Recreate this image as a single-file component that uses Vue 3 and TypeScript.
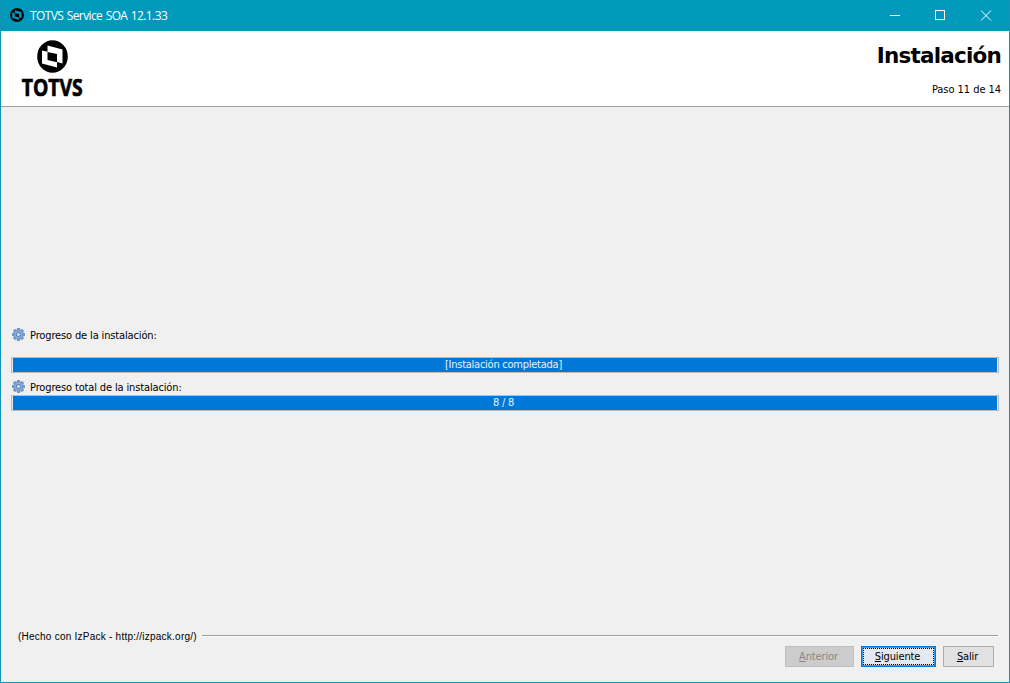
<script setup lang="ts">
interface ProgressItem {
  id: string
  label: string
  text: string
  percent: number
}

const items: ProgressItem[] = [
  { id: 'pack', label: 'Progreso de la instalación:', text: '[Instalación completada]', percent: 100 },
  { id: 'overall', label: 'Progreso total de la instalación:', text: '8 / 8', percent: 100 },
]
const teeth = [0, 45, 90, 135, 180, 225, 270, 315]
const panels = 'M10.5 5.5L25.5 9.5V23.5L20 22V14L10.5 12ZM5 10.5L10.5 11.7V20L20 22.3V27.5L5 23.5Z'
</script>

<template>
  <div class="window">
    <header class="titlebar">
      <svg class="app-icon" viewBox="0 0 31 33" preserveAspectRatio="none">
        <ellipse cx="15.5" cy="16.5" rx="15.5" ry="16.5" fill="#050505" />
        <path :d="panels" fill="#0099bc" />
      </svg>
      <span class="title">TOTVS Service SOA 12.1.33</span>
      <div class="controls">
        <svg viewBox="0 0 46 30"><path d="M17 15.5H27" /></svg>
        <svg viewBox="0 0 46 30"><rect x="16.5" y="10.5" width="9" height="9" /></svg>
        <svg viewBox="0 0 46 30"><path d="M16 10.5L26 20.5M26 10.5L16 20.5" /></svg>
      </div>
    </header>

    <section class="heading">
      <div class="brand">
        <svg class="mark" viewBox="0 0 31 33">
          <ellipse cx="15.5" cy="16.5" rx="15.3" ry="16.3" fill="#000" />
          <path :d="panels" fill="#fff" />
        </svg>
        <span class="wordmark">TOTVS</span>
      </div>
      <div class="step">
        <h1>Instalación</h1>
        <p>Paso 11 de 14</p>
      </div>
    </section>

    <main class="content">
      <div v-for="item in items" :key="item.id" class="item" :class="item.id">
        <div class="label">
          <svg class="gear" viewBox="0 0 13 13">
            <rect
              v-for="angle in teeth"
              :key="angle"
              x="5.2"
              y="0.3"
              width="2.6"
              height="3"
              rx="0.8"
              :transform="`rotate(${angle} 6.5 6.5)`"
              fill="#7c9fd0"
              stroke="#4f78b4"
              stroke-width="0.7"
            />
            <circle cx="6.5" cy="6.5" r="4.5" fill="#8fb0dc" stroke="#5a84c0" stroke-width="0.6" />
            <circle cx="6.5" cy="6.5" r="2.2" fill="#a9c6ea" stroke="#4f7ab8" stroke-width="0.9" />
            <circle cx="6.5" cy="6.5" r="0.9" fill="#eaf3ee" />
          </svg>
          <span>{{ item.label }}</span>
        </div>
        <div class="bar">
          <div class="fill" :style="{ width: item.percent + '%' }"><span>{{ item.text }}</span></div>
        </div>
      </div>
    </main>

    <footer>
      <div class="credit"><span>(Hecho con IzPack - http://izpack.org/)</span><i></i></div>
      <div class="actions">
        <button class="previous" disabled><span><u>A</u>nterior</span></button>
        <button class="next"><span><u>S</u>iguiente</span></button>
        <button class="quit"><span><u>S</u>alir</span></button>
      </div>
    </footer>
  </div>
</template>

<style>
body {
  margin: 0;
}
</style>

<style scoped>
.window {
  box-sizing: border-box;
  width: 1010px;
  height: 683px;
  display: flex;
  flex-direction: column;
  border: 1px solid #1593b4;
  border-top: 0;
  background: #f0f0f0;
  color: #000;
  font: 11px/14px "DejaVu Sans Condensed", "DejaVu Sans", sans-serif;
  font-stretch: condensed;
  letter-spacing: -0.14px;
  white-space: nowrap;
  overflow: hidden;
}
.titlebar {
  height: 31px;
  flex: none;
  display: flex;
  align-items: center;
  margin: 0 -1px;
  background: #0099bc;
  color: #fff;
}
.app-icon {
  width: 14px;
  height: 14px;
  margin: 0 0 1px 10px;
}
.title {
  margin-left: 6px;
  font: 12px/16px "Open Sans", sans-serif;
  letter-spacing: -0.6px;
  word-spacing: 0.9px;
}
.controls {
  display: flex;
  margin: 0 -1px 1px auto;
}
.controls svg {
  width: 46px;
  height: 30px;
  fill: none;
  stroke: #fff;
  stroke-width: 1;
}
.heading {
  box-sizing: border-box;
  height: 76px;
  flex: none;
  display: flex;
  justify-content: space-between;
  background: #fff;
  border-bottom: 1px solid #a0a0a0;
}
.brand {
  width: 61px;
  margin: 9px 0 0 21px;
  display: flex;
  flex-direction: column;
  align-items: center;
}
.mark {
  width: 31px;
  height: 33px;
}
.wordmark {
  font: 700 23px/24px "Open Sans", sans-serif;
  letter-spacing: 0;
  transform: scaleX(0.84);
  margin-top: 2px;
  -webkit-text-stroke: 0.7px #000;
}
.step {
  text-align: right;
  padding: 11px 8px 0 0;
}
.step h1 {
  margin: 0;
  font: 700 21.5px/28px "DejaVu Sans", sans-serif;
  font-stretch: normal;
  letter-spacing: -0.8px;
}
.step p {
  margin: 13px 0 0;
  letter-spacing: -0.05px;
}
.content {
  flex: 1;
  padding: 221px 10px 0 10px;
}
.label {
  height: 14px;
  display: flex;
  align-items: flex-start;
}
.label span {
  padding-top: 1px;
}
.gear {
  width: 13px;
  height: 13px;
  margin: 0 5px 0 1px;
}
.bar {
  box-sizing: border-box;
  height: 16px;
  padding: 0 1px;
  border: 1px solid #bcbcbc;
  background: #e6e6e6;
}
.pack .bar {
  margin-top: 15px;
}
.overall {
  margin-top: 7px;
}
.overall .bar {
  margin-top: 1px;
}
.fill {
  height: 14px;
  background: #0078d7;
  color: #e9f3fc;
  line-height: 13px;
  letter-spacing: -0.25px;
  text-align: center;
}
.fill span {
  margin-right: 3px;
}
footer {
  height: 53px;
  flex: none;
  padding: 0 11px 0 17px;
}
.credit {
  height: 14px;
  display: flex;
  align-items: center;
  gap: 5px;
  font: 10px/14px "Liberation Sans", sans-serif;
  letter-spacing: 0.24px;
}
.credit span {
  padding-top: 2px;
}
.credit i {
  flex: 1;
  height: 1px;
  background: #a0a0a0;
  border-bottom: 1px solid #fff;
}
.actions {
  display: flex;
  justify-content: flex-end;
  padding: 3px 4px 0 0;
}
button {
  box-sizing: border-box;
  height: 21px;
  margin: 0;
  padding: 0 2px 0 0;
  border: 1px solid #adadad;
  border-radius: 0;
  background: #e1e1e1;
  color: #000;
  font: inherit;
  letter-spacing: inherit;
}
.previous {
  width: 69px;
  margin-right: 7px;
  border-color: #bfbfbf;
  background: #cccccc;
  color: #868686;
}
.next {
  width: 75px;
  margin-right: 7px;
  border: 1px solid #0078d7;
  background: #e3e9ef;
  box-shadow: inset 0 0 0 1px #3f9ae5;
  outline: 1px dotted #000;
  outline-offset: -3px;
}
.quit {
  width: 51px;
}
</style>
